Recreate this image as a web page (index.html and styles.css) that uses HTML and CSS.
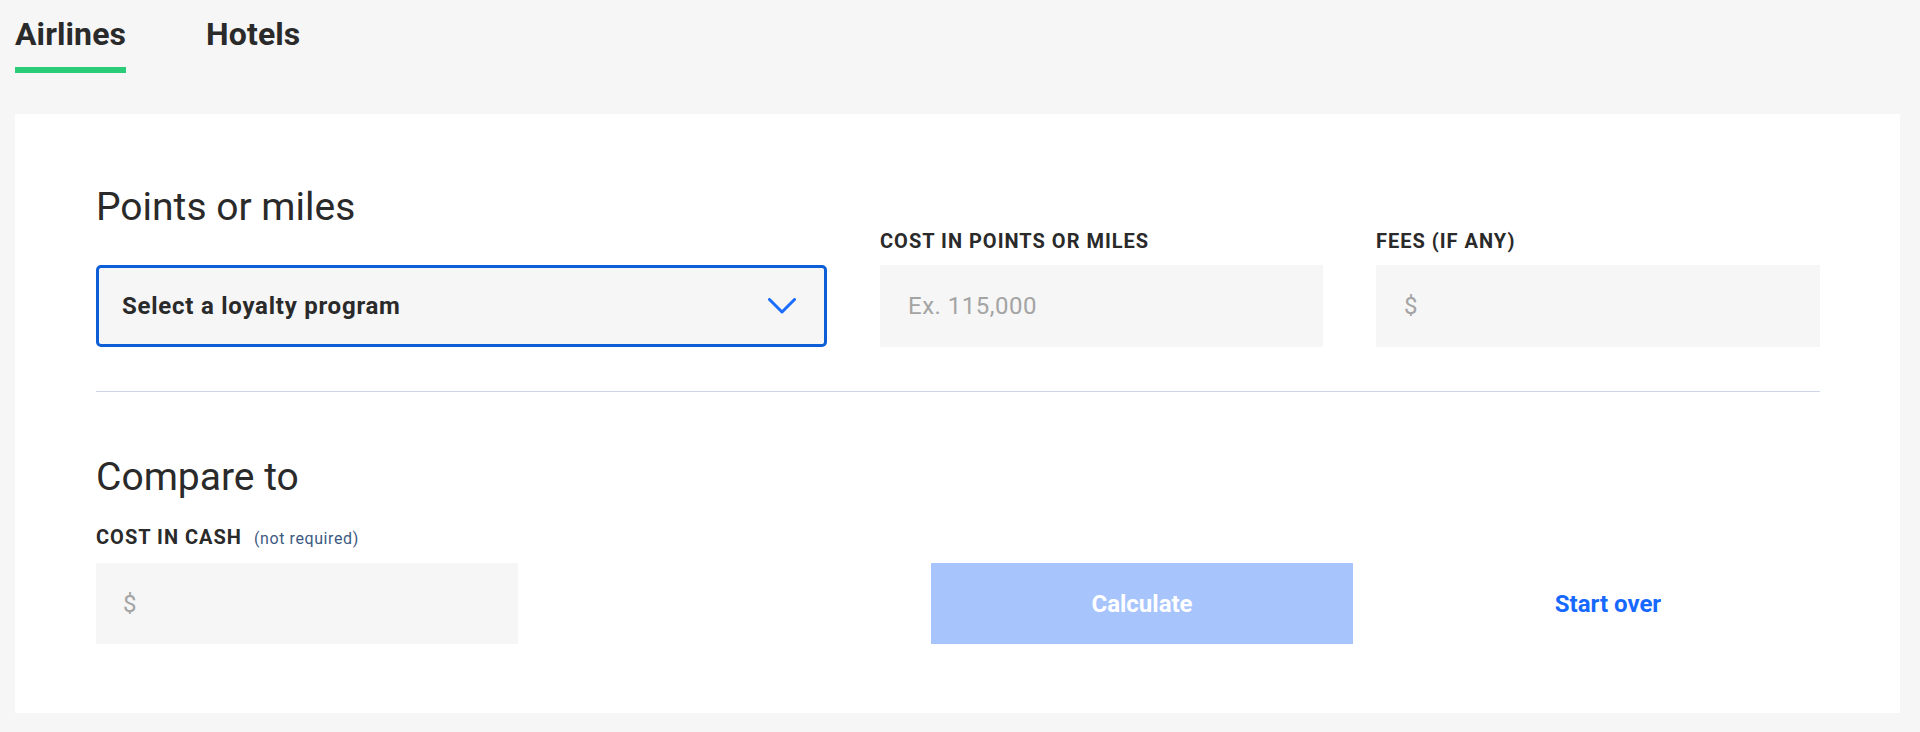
FILE: index.html
```html
<!DOCTYPE html>
<html lang="en">
<head>
<meta charset="utf-8">
<title>Points calculator</title>
<link rel="stylesheet" href="styles.css">
</head>
<body>
  <nav class="tabs">
    <a class="tab tab-active">Airlines</a>
    <a class="tab">Hotels</a>
  </nav>
  <main class="card">
    <section class="points-row">
      <h2 class="section-title">Points or miles</h2>
      <label class="field-label">COST IN POINTS OR MILES</label>
      <label class="field-label">FEES (IF ANY)</label>
      <div class="select-box">
        <span class="select-text">Select a loyalty program</span>
        <svg class="chevron" width="28" height="16" viewBox="0 0 28 16" aria-hidden="true">
          <polyline points="1.5,1.5 14,14 26.5,1.5" fill="none" stroke="#1a6dff" stroke-width="3" stroke-linecap="round" stroke-linejoin="round"/>
        </svg>
      </div>
      <div class="input-box"><span class="placeholder">Ex. 115,000</span></div>
      <div class="input-box"><span class="placeholder">$</span></div>
    </section>
    <hr class="divider">
    <section class="compare">
      <h2 class="section-title compare-title">Compare to</h2>
      <div class="compare-row">
        <div class="cash-field">
          <div class="field-label cash-label">COST IN CASH <span class="optional">(not required)</span></div>
          <div class="input-box cash-input"><span class="placeholder">$</span></div>
        </div>
        <button class="calc-btn" type="button">Calculate</button>
        <div class="reset-wrap"><a class="reset-link">Start over</a></div>
      </div>
    </section>
  </main>
</body>
</html>
```
FILE: styles.css
```css
* { box-sizing: border-box; }

body {
  margin: 0;
  padding: 16px 20px 20px 15px;
  background: #f6f6f6;
  font-family: Roboto, "Liberation Sans", Arial, sans-serif;
  color: #2a2a2a;
}

.tabs {
  display: flex;
  gap: 80px;
  height: 57px;
}

.tab {
  font-size: 32px;
  font-weight: 700;
  line-height: 36px;
  letter-spacing: 0.1px;
  color: #2a2a2a;
  height: 57px;
  padding-bottom: 15px;
}

.tab-active {
  border-bottom: 6px solid #2bcc78;
}

.card {
  margin-top: 41px;
  background: #ffffff;
  padding: 71px 80px 69px 81px;
}

.points-row {
  display: grid;
  grid-template-columns: 731fr 443fr 444fr;
  column-gap: 53px;
  align-items: end;
}

.section-title {
  margin: 0 0 36px;
  font-size: 39px;
  font-weight: 400;
  line-height: 44px;
  color: #2a2a2a;
}

.field-label {
  display: block;
  font-size: 20px;
  font-weight: 700;
  line-height: 22px;
  letter-spacing: 1px;
  color: #2a2a2a;
  margin-bottom: 13px;
}

.select-box {
  height: 82px;
  border: 3px solid #0d5fd8;
  border-radius: 5px;
  background: #f6f6f6;
  display: flex;
  align-items: center;
  justify-content: space-between;
  padding: 0 28px 0 23px;
}

.select-text {
  font-size: 24px;
  font-weight: 700;
  color: #2a2a2a;
  letter-spacing: 0.75px;
}

.chevron { display: block; }

.input-box {
  height: 82px;
  background: #f6f6f6;
  display: flex;
  align-items: center;
  padding-left: 28px;
}

.placeholder {
  font-size: 24px;
  color: #a4a4a4;
  letter-spacing: 0.5px;
}

.divider {
  border: 0;
  height: 1px;
  background: #cdd6e4;
  margin: 44px 0 0;
}

.compare-title {
  margin: 63px 0 27px;
}

.compare-row {
  display: flex;
  align-items: flex-end;
}

.cash-field {
  width: 422px;
}

.cash-label {
  margin-bottom: 13px;
}

.optional {
  font-size: 16px;
  font-weight: 400;
  letter-spacing: 0.6px;
  color: #3d5a82;
  margin-left: 6px;
}

.cash-input {
  height: 81px;
  padding-left: 27px;
}

.calc-btn {
  margin-left: 413px;
  width: 422px;
  height: 81px;
  border: 0;
  background: #a7c4fc;
  color: #ffffff;
  font-family: Roboto, "Liberation Sans", Arial, sans-serif;
  font-size: 24px;
  font-weight: 700;
  cursor: pointer;
}

.reset-wrap {
  flex: 1;
  height: 81px;
  display: flex;
  align-items: center;
  justify-content: center;
  padding-left: 43px;
}

.reset-link {
  font-size: 24px;
  font-weight: 700;
  color: #1668ff;
}
```
